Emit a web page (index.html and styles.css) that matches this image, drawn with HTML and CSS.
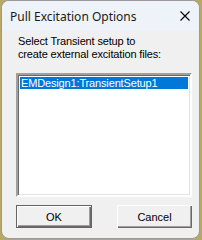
FILE: index.html
```html
<!DOCTYPE html>
<html lang="en">
<head>
    <meta charset="UTF-8">
    <title>Pull Excitation Options</title>
    <link rel="stylesheet" href="styles.css">
</head>
<body>
    <div class="window">
        <div class="titlebar">
            <span class="title">Pull Excitation Options</span>
            <svg class="close" width="10" height="10" viewBox="0 0 10 10">
                <path d="M0.5 0.5 L9.5 9.5 M9.5 0.5 L0.5 9.5" stroke="#000" stroke-width="1.1" fill="none"/>
            </svg>
        </div>
        <div class="content">
            <p class="prompt">Select Transient setup to<br>create external excitation files:</p>
            <div class="listbox">
                <div class="list-item selected">EMDesign1:TransientSetup1</div>
            </div>
            <div class="buttons">
                <button class="btn btn-default">OK</button>
                <button class="btn">Cancel</button>
            </div>
        </div>
    </div>
</body>
</html>
```
FILE: styles.css
```css
body {
    margin: 0;
    width: 202px;
    height: 240px;
    background: #b9a766;
    font-family: "Liberation Sans", Arial, sans-serif;
    overflow: hidden;
}

.window {
    margin: 0 0 0 1px;
    width: 197px;
    height: 237px;
    border: 1px solid #9a9a9a;
    border-radius: 8px;
    background: #f0f0f0;
    overflow: hidden;
    display: flex;
    flex-direction: column;
}

.titlebar {
    height: 30px;
    flex: none;
    background: #eef3f9;
    display: flex;
    align-items: center;
    justify-content: space-between;
    padding: 0 8px 0 8px;
}

.title {
    font-family: "Noto Sans", "Open Sans", sans-serif;
    font-size: 12px;
    color: #1a1a1a;
}

.close {
    margin-right: 1px;
}

.content {
    flex: 1;
    display: flex;
    flex-direction: column;
    padding: 4px 7px 0 14px;
}

.prompt {
    margin: 0 0 0 2px;
    font-size: 11px;
    line-height: 13px;
    letter-spacing: -0.15px;
    color: #000;
}

.listbox {
    box-sizing: border-box;
    margin-top: 12px;
    height: 124px;
    background: #fff;
    border-style: solid;
    border-width: 2px;
    border-color: #a0a0a0 #fff #fff #a0a0a0;
    box-shadow: inset 1px 1px 0 #696969, inset -1px -1px 0 #e3e3e3;
    padding: 2px;
}

.list-item {
    height: 12px;
    line-height: 12px;
    font-size: 11px;
    letter-spacing: -0.15px;
    padding-left: 1px;
}

.list-item.selected {
    background: #0078d7;
    color: #fff;
}

.buttons {
    display: flex;
    justify-content: space-between;
    margin-top: 8px;
}

.btn {
    width: 75px;
    height: 23px;
    padding: 0;
    font-family: "Liberation Sans", Arial, sans-serif;
    font-size: 11px;
    color: #000;
    background: #f0f0f0;
    border: none;
    box-shadow: inset 1px 1px 0 #fff, inset -1px -1px 0 #696969, inset -2px -2px 0 #a0a0a0;
}

.btn-default {
    border: 1px solid #646464;
    width: 76px;
}
```
